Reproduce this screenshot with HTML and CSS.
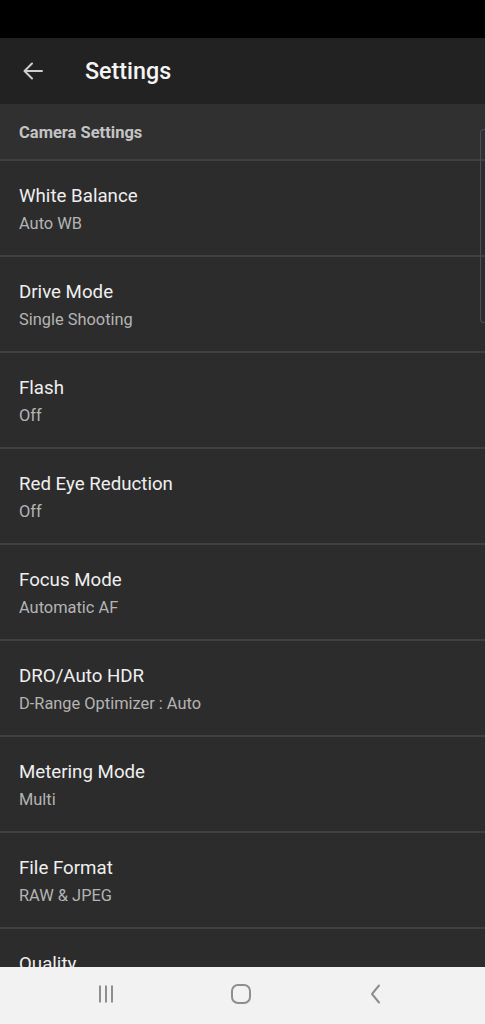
FILE: index.html
```html
<!DOCTYPE html>
<html>
<head>
<meta charset="utf-8">
<link rel="stylesheet" href="styles.css">
</head>
<body>
<div class="screen">
  <div class="statusbar"></div>
  <header class="appbar">
    <svg class="back" width="24" height="24" viewBox="0 0 24 24"><path d="M21 12H4M11 4.5 3.5 12 11 19.5" fill="none" stroke="#cfcfcf" stroke-width="2" stroke-linecap="round" stroke-linejoin="round"/></svg>
    <h1 class="title">Settings</h1>
  </header>
  <main class="content">
    <div class="section">Camera Settings</div>
    <div class="item"><div class="item-title">White Balance</div><div class="item-sub">Auto WB</div></div>
    <div class="item"><div class="item-title">Drive Mode</div><div class="item-sub">Single Shooting</div></div>
    <div class="item"><div class="item-title">Flash</div><div class="item-sub">Off</div></div>
    <div class="item"><div class="item-title">Red Eye Reduction</div><div class="item-sub">Off</div></div>
    <div class="item"><div class="item-title">Focus Mode</div><div class="item-sub">Automatic AF</div></div>
    <div class="item"><div class="item-title">DRO/Auto HDR</div><div class="item-sub">D-Range Optimizer : Auto</div></div>
    <div class="item"><div class="item-title">Metering Mode</div><div class="item-sub">Multi</div></div>
    <div class="item"><div class="item-title">File Format</div><div class="item-sub">RAW &amp; JPEG</div></div>
    <div class="item"><div class="item-title">Quality</div><div class="item-sub">Extra fine</div></div>
    <div class="scroll-indicator"></div>
  </main>
  <nav class="navbar">
    <svg width="24" height="24" viewBox="0 0 24 24" class="nav-recents"><path d="M6 3.5v17M12 3.5v17M18 3.5v17" stroke="#8e8e8e" stroke-width="2" fill="none"/></svg>
    <svg width="24" height="24" viewBox="0 0 24 24" class="nav-home"><rect x="3" y="3" width="18" height="18" rx="6" stroke="#8e8e8e" stroke-width="2" fill="none"/></svg>
    <svg width="24" height="24" viewBox="0 0 24 24" class="nav-back"><path d="M15 3.5 8 12 15 20.5" stroke="#8e8e8e" stroke-width="2" fill="none" stroke-linecap="round" stroke-linejoin="round"/></svg>
  </nav>
</div>
</body>
</html>
```

FILE: styles.css
```css
* { box-sizing: border-box; margin: 0; padding: 0; }
html, body { width: 485px; height: 1024px; overflow: hidden; background: #000; }
body { font-family: Roboto, "Noto Sans", "Liberation Sans", sans-serif; }
.screen { width: 485px; height: 1024px; display: flex; flex-direction: column; }
.statusbar { height: 38px; background: #000; flex: none; }
.appbar {
  height: 66px; flex: none; background: #222222;
  display: flex; align-items: center; padding-left: 21px;
}
.back { flex: none; }
.title {
  margin-left: 40px; font-size: 23.3px; font-weight: 500; color: #f4f4f4;
}
.content {
  flex: 1; overflow: hidden; position: relative; background: #2d2d2d;
}
.section {
  height: 55px; background: #303030; color: #c4c4c4;
  font-size: 16.5px; font-weight: 700; padding: 18px 0 0 19px; line-height: 22px;
}
.item {
  height: 96px; border-top: 2px solid #404040; padding: 22px 0 0 19px;
  background: #2c2c2c;
}
.item-title { font-size: 18.7px; line-height: 26px; color: #efefef; }
.item-sub { font-size: 16.4px; line-height: 22px; color: #b4b4b4; margin-top: 4px; }
.scroll-indicator {
  position: absolute; right: 0; top: 25px; width: 5px; height: 194px;
  border: 1.5px solid #4c4a5c; border-right: none; border-radius: 4px 0 0 4px;
}
.navbar {
  height: 57px; flex: none; background: #f2f2f2;
  display: flex; align-items: center; justify-content: space-between;
  padding: 0 97px 4px 94px;
}
```
